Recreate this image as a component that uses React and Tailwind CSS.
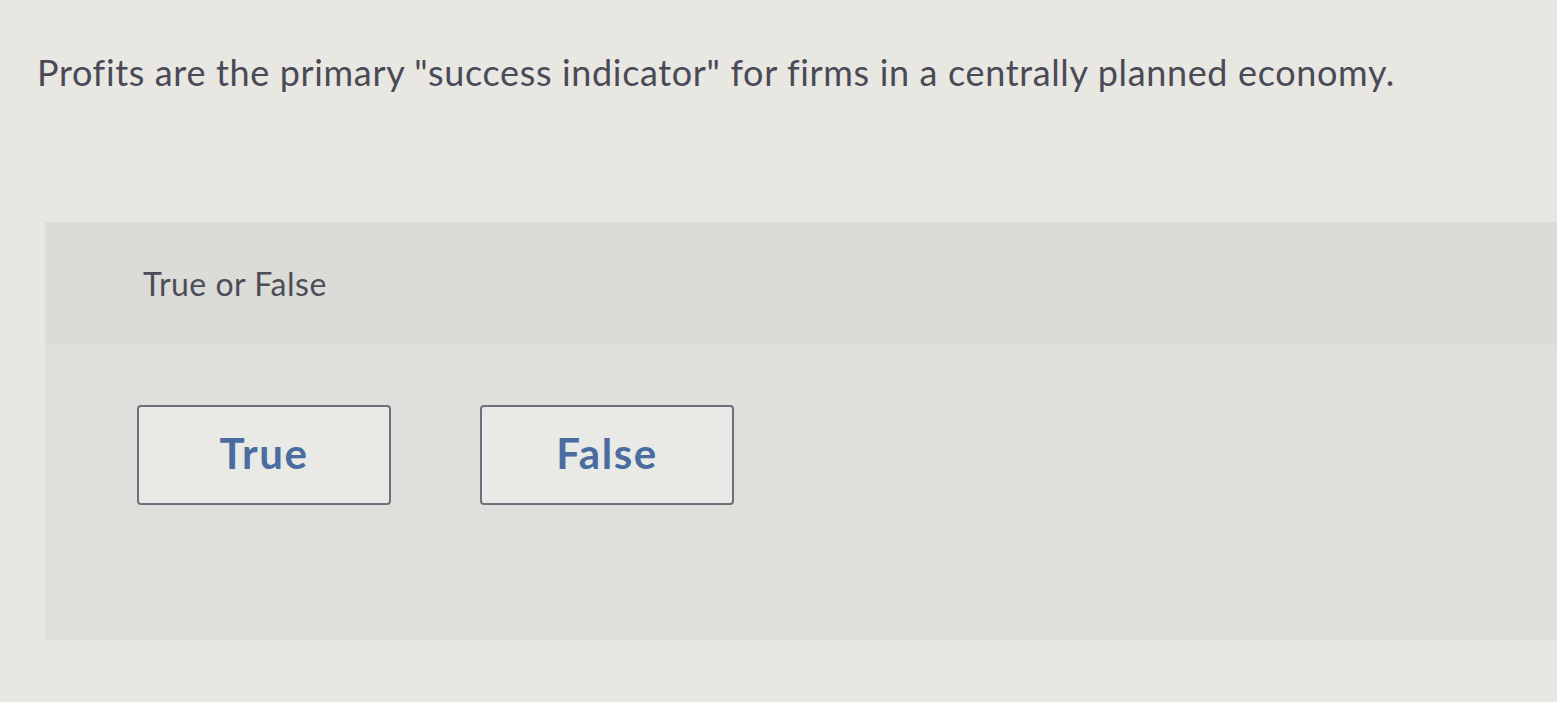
import React from 'react';

const font = { fontFamily: 'Lato, "Open Sans", sans-serif' };

const Choice = ({ label }) => (
  <button className="w-[254px] h-[100px] border-2 border-[#6e6f7a] rounded-[4px] bg-[#e9e9e6] text-[#4a6c9e] text-[42px] tracking-[1.6px] font-bold flex items-center justify-center pb-[3px]">
    {label}
  </button>
);

export default function App() {
  return (
    <div className="w-[1557px] h-[702px] bg-[#e8e7e2] overflow-hidden" style={font}>
      {/* Question */}
      <h1 className="pl-[37px] pt-[54px] text-[36px] leading-[36px] tracking-[0.65px] text-[#4a4a56] font-normal">
        Profits are the primary "success indicator" for firms in a centrally planned economy.
      </h1>

      {/* Answer panel */}
      <div className="mt-[132px] ml-[45px] h-[418px] bg-[#dfdfdc]">
        <div className="h-[123px] bg-[#dbdbd8] pl-[98px] pt-[46px]">
          <p className="text-[32px] leading-[32px] tracking-[0.5px] text-[#4d4d58]">True or False</p>
        </div>
        <div className="flex gap-[89px] pl-[92px] pt-[60px]">
          <Choice label="True" />
          <Choice label="False" />
        </div>
      </div>
    </div>
  );
}
